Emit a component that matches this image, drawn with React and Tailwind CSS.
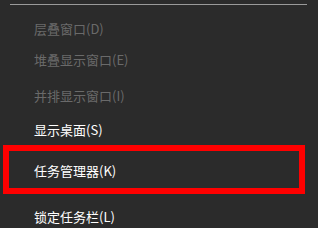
import React from 'react';

const font = { fontFamily: '"Noto Sans CJK SC", "Microsoft YaHei", sans-serif' };

const MenuItem = ({ label, disabled, className = '' }) => (
  <div
    className={`shrink-0 flex items-center pl-[34px] text-[13px] leading-none ${
      disabled ? 'text-[#6a6a6a]' : 'text-white'
    } ${className}`}
  >
    {label}
  </div>
);

const App = () => {
  return (
    <div className="w-[318px] h-[228px] overflow-hidden bg-[#2b2b2b] flex flex-col" style={font}>
      {/* separator from the group above */}
      <div className="shrink-0 pt-[4px] pl-[10px] pr-[11px]">
        <div className="h-px bg-[#9a9a9a]" />
      </div>

      <div className="shrink-0 h-[9px]" />
      <MenuItem label="层叠窗口(D)" disabled className="h-[28px]" />
      <MenuItem label="堆叠显示窗口(E)" disabled className="h-[35px]" />
      <MenuItem label="并排显示窗口(I)" disabled className="h-[36px]" />
      <MenuItem label="显示桌面(S)" className="h-[32px]" />

      {/* highlighted item */}
      <div className="shrink-0 ml-[3px] mr-[13px] h-[49px] border-[6px] border-[#ff0000] flex items-center pl-[25px] pt-[2px] text-[13px] leading-none text-white">
        任务管理器(K)
      </div>

      <MenuItem label="锁定任务栏(L)" className="h-[44px]" />
    </div>
  );
};

export default App;
